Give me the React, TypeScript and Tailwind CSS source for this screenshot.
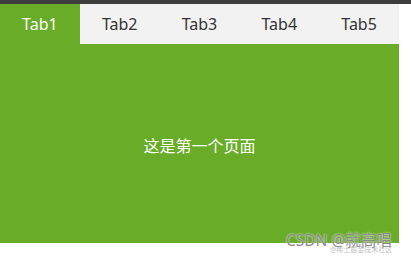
import { useState } from "react";

const tabs = ["Tab1", "Tab2", "Tab3", "Tab4", "Tab5"];
const pages = ["这是第一个页面", "这是第二个页面", "这是第三个页面", "这是第四个页面", "这是第五个页面"];

export default function App() {
  const [active, setActive] = useState(0);

  return (
    <div
      className="relative h-[259px] w-[411px] overflow-hidden bg-white"
      style={{ fontFamily: '"Noto Sans", "Noto Sans CJK SC", sans-serif' }}
    >
      <div className="h-[4px] w-full bg-[#3d3d3d]" />
      <div className="w-[399px]">
        {/* Tab bar */}
        <div className="flex h-[40px] bg-[#f2f2f2]">
          {tabs.map((t, i) => (
            <button
              key={t}
              onClick={() => setActive(i)}
              className={
                "flex h-full w-[79.8px] items-center justify-center text-[16px] " +
                (i === active ? "bg-[#69ac28] text-white" : "text-[#333333]")
              }
            >
              {t}
            </button>
          ))}
        </div>
        {/* Content */}
        <div className="flex h-[199px] items-center justify-center bg-[#69ac28] pt-[5px] text-[16px] text-white">
          {pages[active]}
        </div>
      </div>

      {/* Watermark */}
      <div className="absolute left-[286px] top-[229px] text-[15.5px] text-[#8a8a8a] [text-shadow:0_0_2px_#fff]">
        CSDN @就高唱
      </div>
      <div className="absolute left-[330px] top-[246px] text-[7px] leading-none text-[#aaaaaa] opacity-70">
        @稀土掘金技术社区
      </div>
    </div>
  );
}
